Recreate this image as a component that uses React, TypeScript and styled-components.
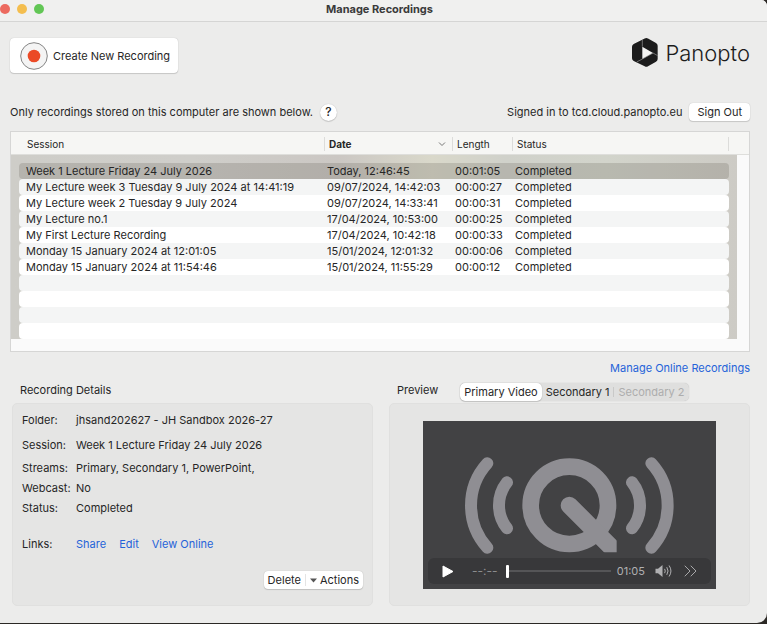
import React from "react";
import styled, { createGlobalStyle, css } from "styled-components";

const GlobalStyle = createGlobalStyle`
  *, *::before, *::after { box-sizing: border-box; }
  body {
    margin: 0;
    background: #2b2825;
    font-family: Inter, "Liberation Sans", sans-serif;
    font-size: 11px;
    line-height: 16px;
    color: #262626;
  }
  button, input { font: inherit; color: inherit; }
`;

const Window = styled.main`
  display: flex;
  flex-direction: column;
  min-height: calc(100vh - 1px);
  background: #ececeb;
  border-radius: 0 6px 10px 0;
  overflow: hidden;
`;

const TitleBar = styled.header`
  display: grid;
  grid-template-columns: 1fr auto 1fr;
  height: 22px;
  padding: 0 8px 4px 0;
  align-items: center;
  background: #f0f0ef;
  border-bottom: 1px solid #d5d5d4;
`;

const Lights = styled.div`
  display: flex;
  gap: 7px;
`;

const Light = styled.button<{ $color: string }>`
  width: 10px;
  height: 10px;
  padding: 0;
  border: 0;
  border-radius: 50%;
  background: ${(p) => p.$color};
`;

const Title = styled.h1`
  margin: 0;
  font-size: 11px;
  font-weight: 700;
  color: #3a3a3a;
`;

const Content = styled.div`
  display: flex;
  flex-direction: column;
  flex: 1;
  padding: 16px 17px 17px 10px;
`;

const Bar = styled.div`
  display: flex;
  align-items: center;
  justify-content: space-between;
`;

const TopBar = styled(Bar)`
  align-items: flex-start;
`;

const raised = css`
  border: 0;
  background: #fff;
  box-shadow: 0 0 1px rgba(0, 0, 0, 0.25), 0 1px 1px rgba(0, 0, 0, 0.14);
`;

const CreateButton = styled.button`
  ${raised}
  display: flex;
  align-items: center;
  gap: 5px;
  height: 35px;
  padding: 0 8px 0 10px;
  border-radius: 4px;
`;

const Brand = styled.div`
  display: flex;
  align-items: center;
  gap: 7px;
  font-size: 22px;
  font-weight: 300;
  line-height: 28px;
  color: #1c1c1c;
`;

const InfoBar = styled(Bar)`
  margin: 30px 0 10px;
`;

const Group = styled.div`
  display: flex;
  align-items: center;
  gap: 7px;
`;

const SmallButton = styled.button`
  ${raised}
  height: 18px;
  padding: 0 8px;
  border-radius: 4px;
`;

const HelpButton = styled.button`
  ${raised}
  width: 17px;
  height: 17px;
  padding: 0;
  border-radius: 50%;
  font-size: 12px;
  font-weight: 500;
`;

const ListBox = styled.div`
  border: 1px solid #d6d6d5;
  background: linear-gradient(#f6f6f4 23px, #fafafa 23px);
  padding-bottom: 12px;
`;

const Table = styled.table`
  display: block;
`;

const columns = css`
  display: grid;
  grid-template-columns: minmax(0, 1fr) 128px 60px 216px;
`;

const Head = styled.thead`
  display: block;
`;

const HeadRow = styled.tr`
  ${columns}
  height: 23px;
  padding: 5px 20px 3px 8px;
  border-bottom: 1px solid #dededb;
`;

const HeadCell = styled.th<{ $sorted?: boolean }>`
  display: flex;
  align-items: center;
  justify-content: space-between;
  padding: 0 6px 0 4px;
  border-right: 1px solid #dcdcda;
  font-size: 10px;
  line-height: 14px;
  font-weight: ${(p) => (p.$sorted ? 700 : 400)};
  &:first-child { padding-left: 8px; }
`;

const Body = styled.tbody`
  display: block;
  margin-right: 12px;
  padding: 8px 8px 0 8px;
  background: linear-gradient(
    90deg,
    #cecdc8 0%,
    #cfceca 25%,
    #cbc7c3 45%,
    #d9d8ca 58%,
    #d0d1ca 68%,
    #d2d4cb 82%,
    #cdcbc5 100%
  );
`;

const Row = styled.tr<{ $tone: "selected" | "even" | "odd" }>`
  ${columns}
  height: 16px;
  border-radius: 4px;
  background: ${(p) =>
    p.$tone === "selected" ? "rgba(60, 52, 40, 0.17)" : p.$tone === "odd" ? "#f4f5f5" : "#fff"};
`;

const Cell = styled.td`
  padding: 0 2px;
  white-space: nowrap;
  overflow: hidden;
  &:first-child { padding-left: 7px; }
`;

const Link = styled.a`
  color: #2563d9;
  text-decoration: none;
`;

const OnlineRow = styled.div`
  display: flex;
  justify-content: flex-end;
  margin: 8px 0 5px;
`;

const Panels = styled.div`
  display: grid;
  grid-template-columns: repeat(2, minmax(0, 1fr));
  gap: 16px;
  flex: 1;
  padding-left: 2px;
`;

const Section = styled.section`
  display: flex;
  flex-direction: column;
`;

const SectionBar = styled.div`
  display: flex;
  gap: 22px;
  height: 22px;
  padding-left: 8px;
`;

const SectionTitle = styled.h2`
  margin: 0;
  padding-top: 1px;
  font-size: 11px;
  font-weight: 400;
`;

const Panel = styled.div`
  display: flex;
  flex-direction: column;
  flex: 1;
  border: 1px solid #e0e0df;
  border-radius: 5px;
  background: #e5e5e4;
`;

const DetailsPanel = styled(Panel)`
  justify-content: space-between;
  padding: 8px 9px 16px;
`;

const Details = styled.dl`
  display: grid;
  grid-template-columns: 54px 1fr;
  grid-template-rows: 25px 23px 20px 20px 36px 20px;
  margin: 0;
`;

const Term = styled.dt``;

const Value = styled.dd`
  display: flex;
  gap: 13px;
  margin: 0;
`;

const ActionGroup = styled.div`
  ${raised}
  display: flex;
  align-items: center;
  align-self: flex-end;
  height: 18px;
  border-radius: 4px;
`;

const ActionButton = styled.button`
  display: flex;
  align-items: center;
  gap: 3px;
  padding: 0 4px;
  border: 0;
  background: none;
  & + & { border-left: 1px solid #e4e4e4; line-height: 12px; }
`;

const Tabs = styled.div`
  display: flex;
  align-items: center;
  height: 18px;
  margin-top: 2px;
  border-radius: 5px;
  background: #dfdfde;
  box-shadow: 0 0 1px rgba(0, 0, 0, 0.25);
`;

const Tab = styled.button<{ $active?: boolean }>`
  height: 18px;
  padding: 0 4px;
  border: 0;
  border-radius: 5px;
  background: none;
  ${(p) => p.$active && raised}
  &:disabled { color: #adadad; }
`;

const TabDivider = styled.span`
  width: 1px;
  height: 10px;
  background: #c9c9c8;
`;

const PreviewPanel = styled(Panel)`
  align-items: center;
  padding: 17px 33px 16px;
`;

const Video = styled.div`
  display: flex;
  flex-direction: column;
  align-items: center;
  justify-content: space-between;
  width: 100%;
  padding: 36px 5px 5px;
  background: #424244;
`;

const Controls = styled.div`
  display: flex;
  align-items: center;
  width: 100%;
  height: 26px;
  margin-top: 4px;
  padding: 0 14px;
  border-radius: 6px;
  background: #38383a;
  color: #b0b0b2;
`;

const IconButton = styled.button`
  display: flex;
  padding: 0;
  border: 0;
  background: none;
`;

const Elapsed = styled.span`
  margin: 0 8px 0 18px;
  font-size: 12px;
  color: #8c8c8e;
`;

const Scrubber = styled.input`
  appearance: none;
  flex: 1;
  min-width: 0;
  height: 14px;
  margin: 0 6px 0 0;
  background: linear-gradient(#555557, #555557) center / 100% 2px no-repeat;
  &::-webkit-slider-thumb {
    appearance: none;
    width: 3px;
    height: 13px;
    border-radius: 1px;
    background: #fff;
  }
`;

const Sound = styled(IconButton)`
  margin: 0 11px 0 10px;
`;

const recordings = [
  ["Week 1 Lecture Friday 24 July 2026", "Today, 12:46:45", "00:01:05", "Completed"],
  ["My Lecture week 3 Tuesday 9 July 2024 at 14:41:19", "09/07/2024, 14:42:03", "00:00:27", "Completed"],
  ["My Lecture week 2 Tuesday 9 July 2024", "09/07/2024, 14:33:41", "00:00:31", "Completed"],
  ["My Lecture no.1", "17/04/2024, 10:53:00", "00:00:25", "Completed"],
  ["My First Lecture Recording", "17/04/2024, 10:42:18", "00:00:33", "Completed"],
  ["Monday 15 January 2024 at 12:01:05", "15/01/2024, 12:01:32", "00:00:06", "Completed"],
  ["Monday 15 January 2024 at 11:54:46", "15/01/2024, 11:55:29", "00:00:12", "Completed"],
  ["", "", "", ""],
  ["", "", "", ""],
  ["", "", "", ""],
  ["", "", "", ""],
];

const RecordIcon = () => (
  <svg width="28" height="28" viewBox="0 0 28 28" aria-hidden="true">
    <circle cx="14" cy="14" r="13.3" fill="#f4f4f4" stroke="#858585" />
    <circle cx="14" cy="14" r="6.3" fill="#eb4a26" />
  </svg>
);

const PanoptoMark = () => (
  <svg width="26" height="29" viewBox="399 111 78 87" aria-hidden="true">
    <path
      d="M437 112.500Q442 110 447 112.500L471 126Q476 129 476 134V174Q476 179 471 182L447 196Q442 199 437 196L404 180Q399 177 399 172V137Q399 132 404 129Z"
      fill="#1c1c1c"
    />
    <path d="M430 137L462 156L430 174Z" fill="#f4f4f3" />
    <path d="M430 116V137M462 156L476 164M430 174L413 183M462 156L430 174" stroke="#9a9a9a" strokeWidth="2" fill="none" />
  </svg>
);

const QuickTimeMark = () => (
  <svg width="209" height="97" viewBox="75 50 627 291" aria-hidden="true">
    <defs>
      <clipPath id="tail">
        <rect x="340" y="150" width="190" height="186" />
      </clipPath>
    </defs>
    <g fill="none" stroke="#8f8e93" strokeLinecap="round">
      <circle cx="388" cy="195" r="116" strokeWidth="50" />
      <path d="M388 195L560 367" strokeWidth="52" clipPath="url(#tail)" />
      <g strokeWidth="36">
        <path d="M201 126A111 111 0 0 0 201 264" />
        <path d="M142 69A188 188 0 0 0 142 322" />
        <path d="M576 126A111 111 0 0 1 576 264" />
        <path d="M634 69A188 188 0 0 1 634 322" />
      </g>
    </g>
  </svg>
);

export default function App() {
  return (
    <>
      <GlobalStyle />
      <Window>
        <TitleBar>
          <Lights>
            <Light $color="#ec6a5f" aria-label="Close" />
            <Light $color="#f4be4f" aria-label="Minimise" />
            <Light $color="#62c655" aria-label="Zoom" />
          </Lights>
          <Title>Manage Recordings</Title>
        </TitleBar>
        <Content>
          <TopBar>
            <CreateButton>
              <RecordIcon />
              Create New Recording
            </CreateButton>
            <Brand>
              <PanoptoMark />
              Panopto
            </Brand>
          </TopBar>
          <InfoBar>
            <Group>
              Only recordings stored on this computer are shown below.
              <HelpButton aria-label="Help">?</HelpButton>
            </Group>
            <Group>
              Signed in to tcd.cloud.panopto.eu
              <SmallButton>Sign Out</SmallButton>
            </Group>
          </InfoBar>
          <ListBox>
            <Table>
              <Head>
                <HeadRow>
                  <HeadCell scope="col">Session</HeadCell>
                  <HeadCell scope="col" $sorted aria-sort="descending">
                    Date
                    <svg width="8" height="6" viewBox="0 0 8 6" fill="none" stroke="#777" aria-hidden="true">
                      <path d="M1 1.500L4 4.500L7 1.500" />
                    </svg>
                  </HeadCell>
                  <HeadCell scope="col">Length</HeadCell>
                  <HeadCell scope="col">Status</HeadCell>
                </HeadRow>
              </Head>
              <Body>
                {recordings.map((cells, i) => (
                  <Row key={i} $tone={i === 0 ? "selected" : i % 2 ? "odd" : "even"}>
                    {cells.map((text, j) => (
                      <Cell key={j}>{text}</Cell>
                    ))}
                  </Row>
                ))}
              </Body>
            </Table>
          </ListBox>
          <OnlineRow>
            <Link href="#online">Manage Online Recordings</Link>
          </OnlineRow>
          <Panels>
            <Section>
              <SectionBar>
                <SectionTitle>Recording Details</SectionTitle>
              </SectionBar>
              <DetailsPanel>
                <Details>
                  <Term>Folder:</Term>
                  <Value>jhsand202627 - JH Sandbox 2026-27</Value>
                  <Term>Session:</Term>
                  <Value>Week 1 Lecture Friday 24 July 2026</Value>
                  <Term>Streams:</Term>
                  <Value>Primary, Secondary 1, PowerPoint,</Value>
                  <Term>Webcast:</Term>
                  <Value>No</Value>
                  <Term>Status:</Term>
                  <Value>Completed</Value>
                  <Term>Links:</Term>
                  <Value>
                    <Link href="#share">Share</Link>
                    <Link href="#edit">Edit</Link>
                    <Link href="#view">View Online</Link>
                  </Value>
                </Details>
                <ActionGroup>
                  <ActionButton>Delete</ActionButton>
                  <ActionButton>
                    <svg width="7" height="5" viewBox="0 0 7 5" aria-hidden="true">
                      <path d="M0 0.500H7L3.500 4.500Z" fill="#555" />
                    </svg>
                    Actions
                  </ActionButton>
                </ActionGroup>
              </DetailsPanel>
            </Section>
            <Section>
              <SectionBar>
                <SectionTitle>Preview</SectionTitle>
                <Tabs>
                  <Tab $active>Primary Video</Tab>
                  <Tab>Secondary 1</Tab>
                  <TabDivider />
                  <Tab disabled>Secondary 2</Tab>
                </Tabs>
              </SectionBar>
              <PreviewPanel>
                <Video>
                  <QuickTimeMark />
                  <Controls>
                    <IconButton aria-label="Play">
                      <svg width="12" height="13" viewBox="0 0 12 13" aria-hidden="true">
                        <path d="M1 1L11 6.500L1 12Z" fill="#fff" stroke="#fff" strokeLinejoin="round" />
                      </svg>
                    </IconButton>
                    <Elapsed>--:--</Elapsed>
                    <Scrubber type="range" min="0" max="65" defaultValue="0" aria-label="Position" />
                    <span>01:05</span>
                    <Sound aria-label="Volume">
                      <svg width="18" height="14" viewBox="0 0 18 14" fill="none" aria-hidden="true">
                        <path d="M0.500 4.800H3L7.500 1V13L3 9.200H0.500Z" fill="#b0b0b2" />
                        <path d="M9.800 5.200Q11 7 9.800 8.800M12 3.500Q14.300 7 12 10.500M14.300 1.800Q17.800 7 14.300 12.200" stroke="#b0b0b2" strokeLinecap="round" />
                      </svg>
                    </Sound>
                    <IconButton aria-label="More">
                      <svg width="13" height="12" viewBox="0 0 13 12" fill="none" stroke="#a8a8aa" strokeLinecap="round" aria-hidden="true">
                        <path d="M1 1L6 6L1 11M7 1L12 6L7 11" />
                      </svg>
                    </IconButton>
                  </Controls>
                </Video>
              </PreviewPanel>
            </Section>
          </Panels>
        </Content>
      </Window>
    </>
  );
}
